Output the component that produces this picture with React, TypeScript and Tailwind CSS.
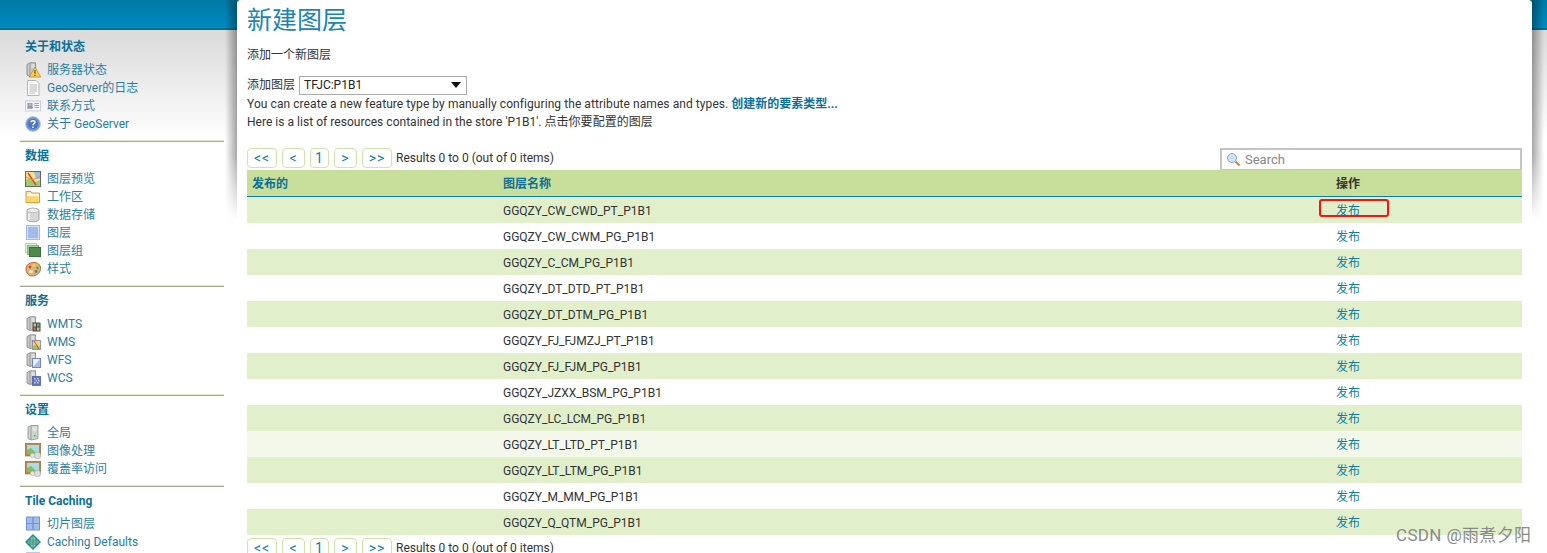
import type { ReactNode } from 'react';

const Svg = ({ children }: { children: ReactNode }) => (
  <svg width="16" height="16" viewBox="0 0 16 16" className="shrink-0">
    {children}
  </svg>
);

const Server = ({ x = 0 }: { x?: number }) => (
  <g transform={`translate(${x} 0)`}>
    <path d="M2 2.5 L5 .8 H10.5 V13 L5 14.5 L2 13 Z" fill="#c9c9c9" stroke="#808080" strokeWidth=".8" />
    <path d="M5 1.5 V14" stroke="#8f8f8f" strokeWidth=".8" />
    <path d="M6.5 3 H9.5 M6.5 5 H9.5" stroke="#f4f4f4" />
  </g>
);

const icons: Record<string, ReactNode> = {
  status: (
    <Svg>
      <Server />
      <path d="M10 5 L15.7 15 H4.3 Z" fill="#f6cf57" stroke="#b98a2e" strokeWidth=".8" />
      <path d="M10 8 V11.8 M10 12.8 V14" stroke="#5a4410" strokeWidth="1.1" />
    </Svg>
  ),
  log: (
    <Svg>
      <path d="M2.5 .5 H11 L14 3.5 V15.5 H2.5 Z" fill="#fbfbfb" stroke="#b5b5b5" />
      <path d="M4.5 5 H12 M4.5 7 H12 M4.5 9 H12 M4.5 11 H12 M4.5 13 H10" stroke="#b9b9b9" />
    </Svg>
  ),
  contact: (
    <Svg>
      <rect x=".5" y="3" width="15" height="10" fill="#f3f5fa" stroke="#c5cede" />
      <rect x="2.5" y="5" width="5" height="5.5" fill="#6f9fdc" />
      <rect x="3.8" y="5.5" width="2.5" height="2.5" fill="#f0b070" />
      <rect x="2.5" y="9" width="5" height="1.5" fill="#e0813a" />
      <path d="M9.5 5.5 H14 M9.5 7.5 H14 M9.5 9.5 H14" stroke="#9aa5b8" />
    </Svg>
  ),
  help: (
    <Svg>
      <circle cx="8" cy="8" r="7.3" fill="#6f93d2" stroke="#a8bde3" />
      <circle cx="8" cy="8" r="5" fill="#4d75bd" />
      <path d="M6 6.3 C6 4.2 10 4.2 10 6.3 C10 7.8 8 7.6 8 9.3 M8 10.5 V12" fill="none" stroke="#fff" strokeWidth="1.4" />
    </Svg>
  ),
  preview: (
    <Svg>
      <rect x=".5" y=".5" width="15" height="15" fill="#f3e391" stroke="#5f6b5f" />
      <path d="M1 15 V9 L6 7 L10 11 L15 9 V15 Z" fill="#a6c96d" />
      <path d="M9 1 H15 V8 L11 8 Z" fill="#9fb9e2" />
      <path d="M3 2 L11 14" stroke="#d9402a" strokeWidth="1.4" />
      <path d="M1 6 L8 9 L15 5" stroke="#e48a5c" fill="none" />
    </Svg>
  ),
  folder: (
    <Svg>
      <path d="M1 2.5 H6 L7 4 H14.5 V13.5 H1 Z" fill="#fbe7a0" stroke="#dd9a3c" />
      <path d="M2 5 H13.5 V6.5 H2 Z" fill="#fff" />
      <path d="M2 7.5 H13.5 V12.5 H2 Z" fill="#f8d768" />
    </Svg>
  ),
  store: (
    <Svg>
      <path d="M2 3.5 C2 .5 14 .5 14 3.5 V12.5 C14 15.5 2 15.5 2 12.5 Z" fill="#d6d6d6" stroke="#a5a5a5" />
      <ellipse cx="8" cy="3.5" rx="5.5" ry="2.2" fill="#f2f2f2" stroke="#b0b0b0" strokeWidth=".6" />
      <path d="M4 6.5 V12.5" stroke="#f4f4f4" strokeWidth="1.5" />
    </Svg>
  ),
  layer: (
    <Svg>
      <rect x="1.5" y=".5" width="13" height="14" fill="#ffffff" stroke="#a9bbdf" />
      <rect x="2.5" y="1.5" width="11" height="12" fill="#a3bce7" />
    </Svg>
  ),
  group: (
    <Svg>
      <rect x=".5" y=".5" width="11" height="9" fill="#e3f0dd" stroke="#b8d2b0" />
      <rect x="2.5" y="2.5" width="11" height="9" fill="#a5cda0" stroke="#8ab487" />
      <rect x="4.5" y="4.5" width="11" height="9" fill="#4d8a4c" stroke="#3b6f3a" />
    </Svg>
  ),
  style: (
    <Svg>
      <path d="M1 8 C1 3 6 1 10 1.5 C14 2 16 5 15.5 8.5 C15 12 11 15 7 15 C3.5 15 1 12 1 8 Z" fill="#e7ae6d" stroke="#a86d3a" />
      <circle cx="5" cy="6" r="1.4" fill="#d8492f" />
      <circle cx="9" cy="4.5" r="1.4" fill="#f1d24a" />
      <circle cx="12.5" cy="7" r="1.4" fill="#5fa84a" />
      <circle cx="11" cy="10.5" r="1.4" fill="#4f7dcb" />
      <ellipse cx="6" cy="10.5" rx="2" ry="1.5" fill="#f8efe0" />
    </Svg>
  ),
  wmts: (
    <Svg>
      <Server />
      <rect x="7.5" y="6.5" width="8" height="9" fill="#3c4a6a" />
      <rect x="8.5" y="7.5" width="2.5" height="3" fill="#e2c13e" />
      <rect x="12" y="7.5" width="2.5" height="3" fill="#6aae55" />
      <rect x="8.5" y="11.5" width="2.5" height="3" fill="#d8623b" />
      <rect x="12" y="11.5" width="2.5" height="3" fill="#e2c13e" />
    </Svg>
  ),
  wms: (
    <Svg>
      <Server />
      <rect x="7.5" y="6.5" width="8" height="9" fill="#efd772" stroke="#7b7fa8" strokeWidth=".8" />
      <path d="M8 15 V12 L11 11 L15 13 V15 Z" fill="#9cc266" />
      <path d="M9 7 L14 15" stroke="#d9402a" />
    </Svg>
  ),
  wfs: (
    <Svg>
      <Server />
      <rect x="7.5" y="6.5" width="8" height="9" fill="#eef2fb" stroke="#6f87c2" />
      <path d="M15 7 V15 H8 Z" fill="#a9bde6" />
    </Svg>
  ),
  wcs: (
    <Svg>
      <Server />
      <rect x="7.5" y="6.5" width="8" height="9" fill="#5a76c4" stroke="#4b63a8" strokeWidth=".8" />
      <path d="M9 8 H10.5 V9.5 H9 Z M12 8 H13.5 V9.5 H12 Z M10.5 10 H12 V11.5 H10.5 Z M13 10 H14.5 V11.5 H13 Z M9 12 H10.5 V13.5 H9 Z M12 12 H13.5 V13.5 H12 Z" fill="#c6d3f2" />
    </Svg>
  ),
  global: (
    <Svg>
      <path d="M3 2 L6 .5 H13 V13.5 L6 15 L3 13.5 Z" fill="#d0d4d0" stroke="#8a8f8a" strokeWidth=".8" />
      <path d="M6 1 V15" stroke="#8f948f" strokeWidth=".8" />
      <path d="M7.5 3 H11.5 M7.5 5 H11.5" stroke="#f5f5f5" />
      <rect x="9" y="10" width="1.5" height="1.5" fill="#3aa34a" />
    </Svg>
  ),
  image: (
    <Svg>
      <rect x="0" y="0" width="16" height="13" fill="#b88a4f" stroke="#8f6a38" strokeWidth=".6" />
      <rect x="2" y="2" width="12" height="9" fill="#a9dbe8" />
      <path d="M2 11 V7 L6 5 L10 9 L12 11 Z" fill="#7fc05c" />
      <circle cx="12.5" cy="12.5" r="3.3" fill="#dcdcdc" stroke="#a5a5a5" strokeWidth=".6" />
      <circle cx="7.5" cy="12.5" r="2.2" fill="#e6e6e6" stroke="#b0b0b0" strokeWidth=".6" />
    </Svg>
  ),
  tiles: (
    <Svg>
      <rect x="1" y=".5" width="14" height="14" fill="#6f94dc" />
      <path d="M2 1.5 H7.3 V7 H2 Z M8.7 1.5 H14 V7 H8.7 Z M2 8 H7.3 V13.5 H2 Z M8.7 8 H14 V13.5 H8.7 Z" fill="#a3bce9" />
    </Svg>
  ),
  globe: (
    <Svg>
      <path d="M8 0 L16 8 L8 16 L0 8 Z" fill="#1f8f9c" />
      <path d="M8 2 L14 8 L8 14 L2 8 Z" fill="#8fd0a5" />
      <path d="M5 4 V12 M8 1 V15 M11 4 V12 M2 6 H14 M1 8 H15 M2 10 H14" stroke="#2f7f8f" strokeWidth=".7" />
    </Svg>
  ),
};

const nav = [
  {
    title: '关于和状态',
    items: [
      ['status', '服务器状态'],
      ['log', 'GeoServer的日志'],
      ['contact', '联系方式'],
      ['help', '关于 GeoServer'],
    ],
  },
  {
    title: '数据',
    items: [
      ['preview', '图层预览'],
      ['folder', '工作区'],
      ['store', '数据存储'],
      ['layer', '图层'],
      ['group', '图层组'],
      ['style', '样式'],
    ],
  },
  {
    title: '服务',
    items: [
      ['wmts', 'WMTS'],
      ['wms', 'WMS'],
      ['wfs', 'WFS'],
      ['wcs', 'WCS'],
    ],
  },
  {
    title: '设置',
    items: [
      ['global', '全局'],
      ['image', '图像处理'],
      ['image', '覆盖率访问'],
    ],
  },
  {
    title: 'Tile Caching',
    items: [
      ['tiles', '切片图层'],
      ['globe', 'Caching Defaults'],
      ['tiles', 'Gridsets'],
    ],
  },
];

const layers = [
  'GGQZY_CW_CWD_PT_P1B1',
  'GGQZY_CW_CWM_PG_P1B1',
  'GGQZY_C_CM_PG_P1B1',
  'GGQZY_DT_DTD_PT_P1B1',
  'GGQZY_DT_DTM_PG_P1B1',
  'GGQZY_FJ_FJMZJ_PT_P1B1',
  'GGQZY_FJ_FJM_PG_P1B1',
  'GGQZY_JZXX_BSM_PG_P1B1',
  'GGQZY_LC_LCM_PG_P1B1',
  'GGQZY_LT_LTD_PT_P1B1',
  'GGQZY_LT_LTM_PG_P1B1',
  'GGQZY_M_MM_PG_P1B1',
  'GGQZY_Q_QTM_PG_P1B1',
];

const rowColour = (i: number) => {
  if (i === 9) return 'bg-[#f3f8ea]';
  return i % 2 === 0 ? 'bg-[#e1efcb]' : 'bg-white';
};

const Pager = () => (
  <div className="flex items-center h-[20px]">
    <div className="flex gap-[5px] text-[#0a7fa8] text-[14px] tracking-[1px]">
      <span className="w-[30px] h-[20px] flex items-center justify-center rounded-[4px] border border-[#cfe3ac] bg-white">&lt;&lt;</span>
      <span className="w-[23px] h-[20px] flex items-center justify-center rounded-[4px] border border-[#cfe3ac] bg-white">&lt;</span>
      <span className="w-[19px] h-[20px] flex items-center justify-center rounded-[4px] border border-[#cfe3ac] bg-white">1</span>
      <span className="w-[23px] h-[20px] flex items-center justify-center rounded-[4px] border border-[#cfe3ac] bg-white">&gt;</span>
      <span className="w-[30px] h-[20px] flex items-center justify-center rounded-[4px] border border-[#cfe3ac] bg-white">&gt;&gt;</span>
    </div>
    <span className="ml-[4px]">Results 0 to 0 (out of 0 items)</span>
  </div>
);

export default function App() {
  return (
    <div className="h-[553px] overflow-hidden flex text-[12px] leading-[18px] text-[#333333] font-['Roboto','Noto_Sans_CJK_SC',sans-serif] bg-[linear-gradient(to_bottom,#007aa5_0px,#008abf_28px,#006f92_28px,#006f92_30px,#dadada_30px,#ffffff_140px)]">
      {/* Sidebar */}
      <aside className="w-[237px] shrink-0 pt-[38px] pl-[20px] pr-[13px]">
        {nav.map((section, idx) => (
          <div key={section.title} className={idx > 0 ? 'border-t border-[#a4ab8e] shadow-[0_-1px_0_#dfe6c9] mt-[8px] pt-[5px]' : ''}>
            <h3 className="pl-[5px] mb-[5px] font-bold text-[#0a7099]">{section.title}</h3>
            <ul>
              {section.items.map(([icon, label]) => (
                <li key={label} className="flex items-center h-[18px] pl-[5px] gap-[6px] text-[#2a7ea3]">
                  {icons[icon]}
                  <span>{label}</span>
                </li>
              ))}
            </ul>
          </div>
        ))}
      </aside>

      {/* Main panel */}
      <main className="relative w-[1295px] shrink-0 bg-white rounded-tl-[4px] rounded-tr-[4px] px-[10px]">
        <div className="absolute top-0 -left-[12px] w-[12px] h-[220px] bg-[linear-gradient(to_left,rgba(0,0,0,0.35),transparent)] [mask-image:linear-gradient(to_bottom,black_70%,transparent)]"></div>
        <div className="absolute top-0 -right-[12px] w-[12px] h-[220px] bg-[linear-gradient(to_right,rgba(0,0,0,0.35),transparent)] [mask-image:linear-gradient(to_bottom,black_70%,transparent)]"></div>

        <h1 className="pt-[5px] text-[25px] leading-[32px] text-[#1b86b3]">新建图层</h1>
        <p className="mt-[9px]">添加一个新图层</p>

        <div className="mt-[11px] flex items-center h-[20px]">
          <span>添加图层</span>
          <div className="ml-[4px] w-[168px] h-[19px] border border-[#aaaaaa] pl-[4px] pr-[5px] flex items-center justify-between text-[#222222]">
            TFJC:P1B1
            <svg width="10" height="6" viewBox="0 0 10 6">
              <path d="M0 0 H10 L5 6 Z" fill="#111111" />
            </svg>
          </div>
        </div>
        <p>
          <span className="tracking-[0.07px]">You can create a new feature type by manually configuring the attribute names and types.</span>{' '}
          <a className="font-bold text-[#0a7099]">创建新的要素类型...</a>
        </p>
        <p className="tracking-[0.03px]">Here is a list of resources contained in the store 'P1B1'. 点击你要配置的图层</p>

        <div className="mt-[17px] flex items-end justify-between h-[22px]">
          <div className="self-start">
            <Pager />
          </div>
          <div className="w-[302px] h-[22px] border-2 border-[#c4c4c4] border-b-[1px] flex items-center gap-[4px] pl-[4px] text-[#888888] text-[13px]">
            <svg width="15" height="15" viewBox="0 0 15 15">
              <circle cx="6" cy="6" r="4.5" fill="#cfe2f7" stroke="#8fa9c9" />
              <path d="M9.5 9.5 L13.5 13.5" stroke="#c9803c" strokeWidth="2" />
            </svg>
            Search
          </div>
        </div>

        <div className="grid grid-cols-[251px_833px_1fr] h-[27px] pt-[2px] items-center bg-[#c7df9a] border-b-[1px] border-[#0a7fa8] font-bold">
          <span className="pl-[5px] text-[#0a7099]">发布的</span>
          <span className="pl-[5px] text-[#0a7099]">图层名称</span>
          <span className="pl-[5px] text-[#333333]">操作</span>
        </div>
        {layers.map((name, i) => (
          <div key={name} className={`grid grid-cols-[251px_833px_1fr] h-[26px] pt-[2px] items-center ${rowColour(i)}`}>
            <span></span>
            <span className="pl-[5px]">{name}</span>
            <a className="pl-[5px] text-[#0a7fa8]">发布</a>
          </div>
        ))}
        <div className="mt-[3px]">
          <Pager />
        </div>

        {/* annotation + watermark */}
        <div className="absolute left-[1082px] top-[199px] w-[70px] h-[18px] border-2 border-[#f5150f] rounded-[3px]"></div>
        <div className="absolute left-[1159px] top-[524px] text-[17px] leading-[22px] tracking-[0.35px] text-[#8a8a8a] whitespace-nowrap">
          CSDN @雨煮夕阳
        </div>
      </main>
    </div>
  );
}
